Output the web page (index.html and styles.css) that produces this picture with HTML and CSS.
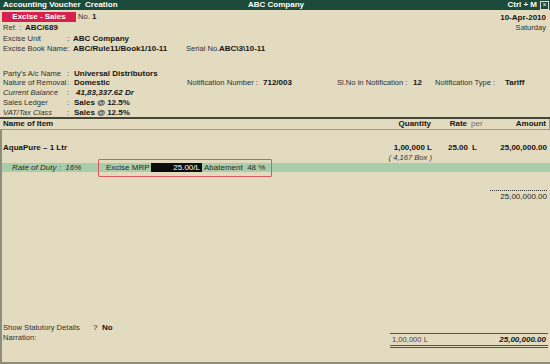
FILE: index.html
```html
<!DOCTYPE html>
<html>
<head>
<meta charset="utf-8">
<link rel="stylesheet" href="styles.css">
</head>
<body>
<div class="screen">
  <div class="titlebar">
    <span class="t-left">Accounting Voucher&nbsp; Creation</span>
    <span class="t-center">ABC Company</span>
    <span class="t-right">Ctrl + M <span class="closebox">×</span></span>
  </div>

  <div class="top">
    <div class="top-left">
      <div class="row"><span class="badge">Excise - Sales</span><span class="lbl">No.</span>&nbsp;<b>1</b></div>
      <div class="row"><span class="lbl ref">Ref. :</span><b>ABC/689</b></div>
      <div class="row"><span class="lbl w1">Excise Unit</span><span class="colon">:</span><b>ABC Company</b></div>
      <div class="row"><span class="lbl w1b">Excise Book Name:</span><b class="book">ABC/Rule11/Book1/10-11</b><span class="lbl serial">Serial No.</span><b>ABC\3\10-11</b></div>
    </div>
    <div class="top-right">
      <div class="row"><b>10-Apr-2010</b></div>
      <div class="row"><span class="lbl">Saturday</span></div>
    </div>
  </div>

  <div class="party">
    <div class="prow"><span class="lbl">Party's A/c Name</span><span class="lbl">:</span><b>Universal Distributors</b></div>
    <div class="prow notif">
      <span class="lbl">Nature of Removal</span><span class="lbl">:</span><b>Domestic</b>
      <span class="lbl">Notification Number :</span><b>712/003</b>
      <span class="lbl">Sl.No in Notification :</span><b>12</b>
      <span class="lbl">Notification Type :</span><b>Tariff</b>
    </div>
    <div class="prow"><span class="lbl it">Current Balance</span><span class="lbl">:</span><b class="it bal">41,83,337.62 Dr</b></div>
    <div class="prow"><span class="lbl">Sales Ledger</span><span class="lbl">:</span><b>Sales @ 12.5%</b></div>
    <div class="prow"><span class="lbl it">VAT/Tax Class</span><span class="lbl">:</span><b>Sales @ 12.5%</b></div>
  </div>

  <div class="items">
    <div class="grid head">
      <b>Name of Item</b>
      <b class="r">Quantity</b>
      <b class="r">Rate</b>
      <span class="per grey">per</span>
      <b class="r">Amount</b>
    </div>

    <div class="body">
      <div class="grid item">
        <b>AquaPure – 1 Ltr</b>
        <b class="r">1,00,000 L</b>
        <b class="r">25.00</b>
        <b class="per">L</b>
        <b class="r">25,00,000.00</b>
      </div>
      <div class="grid sub">
        <span></span>
        <span class="r it box">( 4,167 Box )</span>
      </div>

      <div class="dutybar">
        <span class="it duty">Rate of Duty :&nbsp; 16%</span>
        <span class="mrp">
          <span class="mrp-label">Excise MRP</span>
          <span class="mrp-input">25.00/L</span>
          <span>Abatement&nbsp; 48 %</span>
        </span>
      </div>

      <div class="subtotal">
        <span class="r">25,00,000.00</span>
      </div>

      <div class="spacer"></div>

      <div class="foot">
        <div class="foot-left">
          <div class="row"><span class="lbl w3">Show Statutory Details</span>?&nbsp;&nbsp;<b>No</b></div>
          <div class="row"><span class="lbl">Narration:</span></div>
        </div>
        <div class="totals">
          <span class="tq">1,00,000 L</span>
          <b class="it ta">25,00,000.00</b>
        </div>
      </div>
    </div>
  </div>
</div>
</body>
</html>
```

FILE: styles.css
```css
html, body {
  margin: 0;
  padding: 0;
}
body {
  width: 550px;
  height: 364px;
  overflow: hidden;
  background: #e3dbbf;
  font-family: "Liberation Sans", Arial, sans-serif;
  font-size: 8px;
  color: #1c1c1c;
}
.screen {
  display: flex;
  flex-direction: column;
  height: 364px;
}
b { font-weight: bold; color: #151515; }
.it { font-style: italic; }
.lbl { color: #303030; font-size: 7.6px; }
.grey { color: #6a6a60; }
.r { text-align: right; }

.titlebar {
  height: 10px;
  background: #1c4a3b;
  color: #fff;
  font-weight: bold;
  font-size: 8px;
  line-height: 10px;
  display: grid;
  grid-template-columns: 1fr auto 1fr;
  padding: 0 1px 0 3px;
}
.t-center { text-align: center; }
.t-right { text-align: right; display: flex; justify-content: flex-end; align-items: center; gap: 3px; }
.closebox {
  display: inline-block;
  width: 7px;
  height: 7px;
  border: 1px solid #dcdcdc;
  background: #1c4a3b;
  color: #fff;
  font-size: 7px;
  line-height: 6px;
  text-align: center;
  font-weight: normal;
}

.row {
  height: 10px;
  line-height: 10px;
  white-space: nowrap;
  display: flex;
  align-items: center;
}

.top {
  display: flex;
  justify-content: space-between;
  padding: 2px 4px 0 2px;
}
.top-left .row { height: 10.5px; padding-left: 1px; }
.top-left .row:first-child { height: 10px; margin-bottom: 1px; padding-left: 0; }
.top-right { padding-top: 1px; text-align: right; }
.top-right .row { justify-content: flex-end; }
.badge {
  display: inline-block;
  width: 74px;
  height: 10px;
  background: #d62150;
  color: #fff;
  font-weight: bold;
  text-align: center;
  line-height: 10px;
  margin-right: 2px;
}
.ref { width: 22px; }
.w1 { width: 64px; }
.w1b { width: 70px; }
.colon { width: 6px; }
.book { width: 113px; }
.serial { width: 33px; }

.party {
  padding: 14px 0 0 3px;
}
.prow {
  display: grid;
  grid-template-columns: 64px 7px 1fr;
  height: 9.8px;
  line-height: 9.8px;
  white-space: nowrap;
  align-items: center;
}
.prow.notif {
  grid-template-columns: 64px 7px 113px 76px 74px 76px 22px 70px 1fr;
}
.bal { padding-left: 2px; }

.items {
  flex: 1;
  display: flex;
  flex-direction: column;
  margin-top: 0;
  border-top: 2px solid #45453a;
}
.grid {
  display: grid;
  grid-template-columns: 1fr 62px 36px 32px 47px;
  padding: 0 3px 0 3px;
  white-space: nowrap;
  line-height: 10px;
}
.per { padding-left: 4px; }
.head {
  height: 10px;
  border-bottom: 1px solid #9d9a88;
  border-right: 1px solid #9d9a88;
}
.body {
  flex: 1;
  display: flex;
  flex-direction: column;
  border-left: 2px solid #8f8d7d;
  border-bottom: 2px solid #8f8d7d;
}
.body .grid { padding-left: 1px; }
.item { margin-top: 13px; }
.sub .box { color: #333; font-size: 7.6px; }

.dutybar {
  height: 9px;
  background: #a9ccaa;
  display: flex;
  align-items: center;
  line-height: 9px;
  color: #2a2a2a;
}
.duty { margin-left: 10px; width: 94px; }
.mrp {
  position: relative;
  display: flex;
  align-items: center;
}
.mrp::after {
  content: "";
  position: absolute;
  left: -8px;
  right: -7px;
  top: -4px;
  bottom: -5px;
  border: 1px solid #e0585c;
  border-radius: 1px;
}
.mrp-label { width: 45px; }
.mrp-input {
  background: #0d0d0d;
  color: #fff;
  width: 49px;
  text-align: right;
  padding-right: 2px;
  margin-right: 2px;
}

.subtotal {
  display: flex;
  justify-content: flex-end;
  padding-right: 3px;
  margin-top: 18px;
}
.subtotal span {
  border-top: 1px dotted #333;
  width: 57px;
  padding-top: 1px;
  line-height: 10px;
  color: #1e1e1e;
}

.spacer { flex: 1; }

.foot {
  display: flex;
  justify-content: space-between;
  align-items: flex-start;
  padding-bottom: 14px;
}
.foot-left { padding-left: 1px; }
.w3 { width: 90px; }
.totals {
  width: 158px;
  margin-right: 2px;
  margin-top: 10px;
  display: flex;
  justify-content: space-between;
  border-top: 1px solid #55554a;
  border-bottom: 3px double #55554a;
  padding: 1px 2px 1px 2px;
  line-height: 9px;
  box-sizing: border-box;
}
.tq { color: #4a3a5a; font-size: 7.6px; }
```
